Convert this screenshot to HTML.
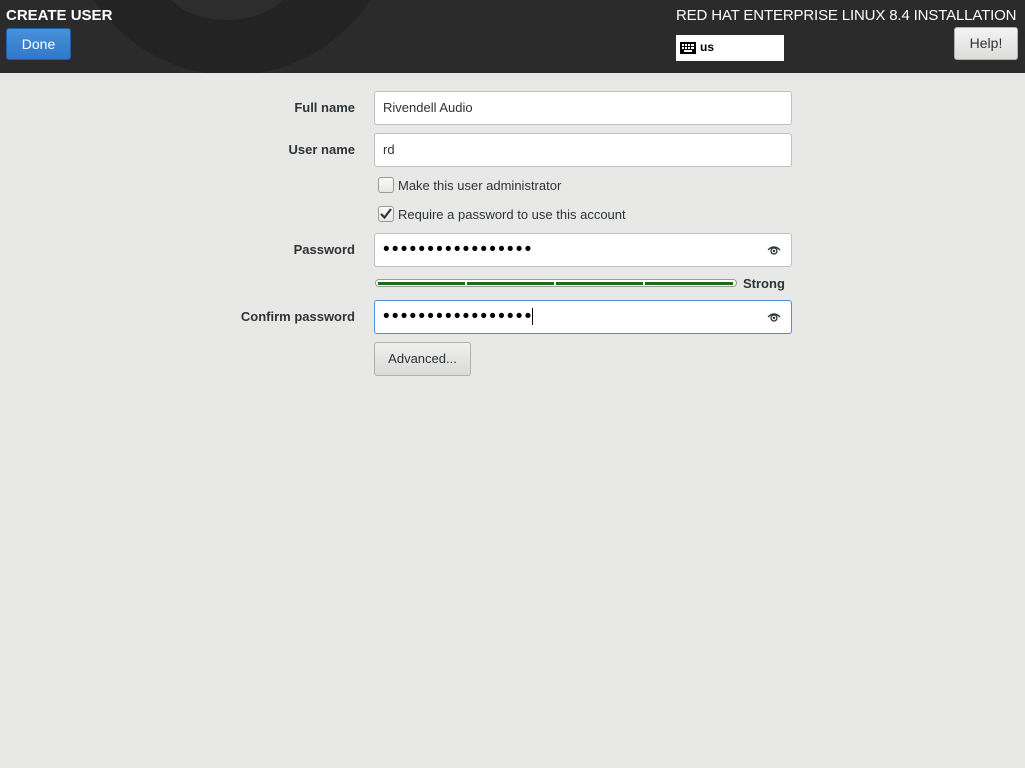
<!DOCTYPE html>
<html><head><meta charset="utf-8"><style>
body{margin:0;width:1025px;height:768px;background:#e8e8e7;font-family:"Liberation Sans",sans-serif;overflow:hidden;position:relative;font-size:13px;color:#2e3436}
.hdr{position:absolute;left:0;top:0;width:1025px;height:73px;background:#2b2b2b;overflow:hidden}
.c1{position:absolute;left:67px;top:-255px;width:330px;height:330px;border-radius:50%;background:#232323}
.c2{position:absolute;left:162px;top:-62px;width:130px;height:82px;border-radius:50%;background:#2d2d2d}
.t{position:absolute;color:#fff;white-space:nowrap}
.done{position:absolute;left:6px;top:28px;width:65px;height:32px;border:1px solid #1c5fa8;border-radius:3px;background:linear-gradient(#4a90d9,#2f78cb);color:#fff;text-align:center;line-height:30px;box-sizing:border-box;font-size:14px}
.kb{position:absolute;left:676px;top:35px;width:108px;height:26px;background:#fff}
.help{position:absolute;left:954px;top:27px;width:64px;height:33px;border:1px solid #b0b0ad;border-radius:3px;background:linear-gradient(#f4f4f3,#dcdcda);text-align:center;line-height:31px;box-sizing:border-box;color:#2e3436;font-size:14px}
.lbl{position:absolute;right:670px;font-weight:bold;font-size:13px;color:#2e3436}
.in{position:absolute;left:374px;width:418px;height:34px;background:#fff;border:1px solid #c0c0bd;border-radius:3px;box-sizing:border-box;padding-left:8px;line-height:32px;white-space:nowrap}
.cb{position:absolute;left:378px;width:16px;height:16px;border:1px solid #9a9a98;border-radius:3px;background:linear-gradient(#fafafa,#e6e6e5);box-sizing:border-box}
.ct{position:absolute;left:398px;font-size:13px}
.dots{font-size:19px;letter-spacing:2.2px;color:#000}
.eye{position:absolute;right:10px;top:10px}
</style></head><body>
<div class="hdr"><div class="c1"></div><div class="c2"></div>
<div class="t" style="left:6px;top:7px;font-weight:bold;font-size:15px">CREATE USER</div>
<div class="done">Done</div>
<div class="t" style="left:676px;top:7px;font-size:15px;letter-spacing:-0.15px">RED HAT ENTERPRISE LINUX 8.4 INSTALLATION</div>
<div class="kb"><svg style="position:absolute;left:4px;top:7px" width="16" height="12"><rect x="0" y="0" width="16" height="12" fill="#000"/><g fill="#fff"><rect x="2" y="2" width="2" height="2"/><rect x="5" y="2" width="2" height="2"/><rect x="8" y="2" width="2" height="2"/><rect x="11" y="2" width="3" height="2"/><rect x="2" y="5" width="2" height="2"/><rect x="5" y="5" width="2" height="2"/><rect x="8" y="5" width="2" height="2"/><rect x="11" y="5" width="3" height="2"/><rect x="4" y="8" width="8" height="2"/></g></svg><span style="position:absolute;left:24px;top:5px;font-weight:bold;font-size:12px;color:#000">us</span></div>
<div class="help">Help!</div>
</div>
<div class="lbl" style="top:100px">Full name</div>
<div class="in" style="top:91px">Rivendell Audio</div>
<div class="lbl" style="top:142px">User name</div>
<div class="in" style="top:133px">rd</div>
<div class="cb" style="top:177px"></div><div class="ct" style="top:178px">Make this user administrator</div>
<div class="cb" style="top:206px"><svg width="14" height="14" style="position:absolute;left:0;top:0"><path d="M2 7 L5.5 10.5 L12 2" stroke="#2e3436" stroke-width="2.2" fill="none"/></svg></div><div class="ct" style="top:207px">Require a password to use this account</div>
<div class="lbl" style="top:242px">Password</div>
<div class="in dots" style="top:233px">•••••••••••••••••<svg class="eye" width="14" height="12" viewBox="0 0 14 12"><path d="M1 6 Q7 0 13 6" stroke="#2e3436" fill="none" stroke-width="1.3"/><circle cx="7" cy="7" r="3" stroke="#2e3436" fill="none" stroke-width="1.3"/><circle cx="7" cy="7" r="1.2" fill="#2e3436"/></svg></div>
<div style="position:absolute;left:375px;top:279px;width:362px;height:8px;border:1px solid #9a9a98;border-radius:4px;background:#fff;box-sizing:border-box"></div>
<div style="position:absolute;left:378px;top:282px;width:87px;height:3px;background:#1b6b1b"></div>
<div style="position:absolute;left:467px;top:282px;width:87px;height:3px;background:#1b6b1b"></div>
<div style="position:absolute;left:556px;top:282px;width:87px;height:3px;background:#1b6b1b"></div>
<div style="position:absolute;left:645px;top:282px;width:88px;height:3px;background:#1b6b1b"></div>
<div style="position:absolute;left:743px;top:276px;font-weight:bold;font-size:13px">Strong</div>
<div class="lbl" style="top:309px">Confirm password</div>
<div class="in dots" style="top:300px;border:1px solid #4a90d9">•••••••••••••••••<span style="display:inline-block;width:1px;height:17px;background:#000;vertical-align:middle;margin-left:-1px"></span><svg class="eye" width="14" height="12" viewBox="0 0 14 12"><path d="M1 6 Q7 0 13 6" stroke="#2e3436" fill="none" stroke-width="1.3"/><circle cx="7" cy="7" r="3" stroke="#2e3436" fill="none" stroke-width="1.3"/><circle cx="7" cy="7" r="1.2" fill="#2e3436"/></svg></div>
<div style="position:absolute;left:374px;top:342px;width:97px;height:34px;border:1px solid #b0b0ad;border-radius:3px;background:linear-gradient(#f0f0ef,#dadad8);box-sizing:border-box;text-align:center;line-height:32px">Advanced...</div>
</body></html>
